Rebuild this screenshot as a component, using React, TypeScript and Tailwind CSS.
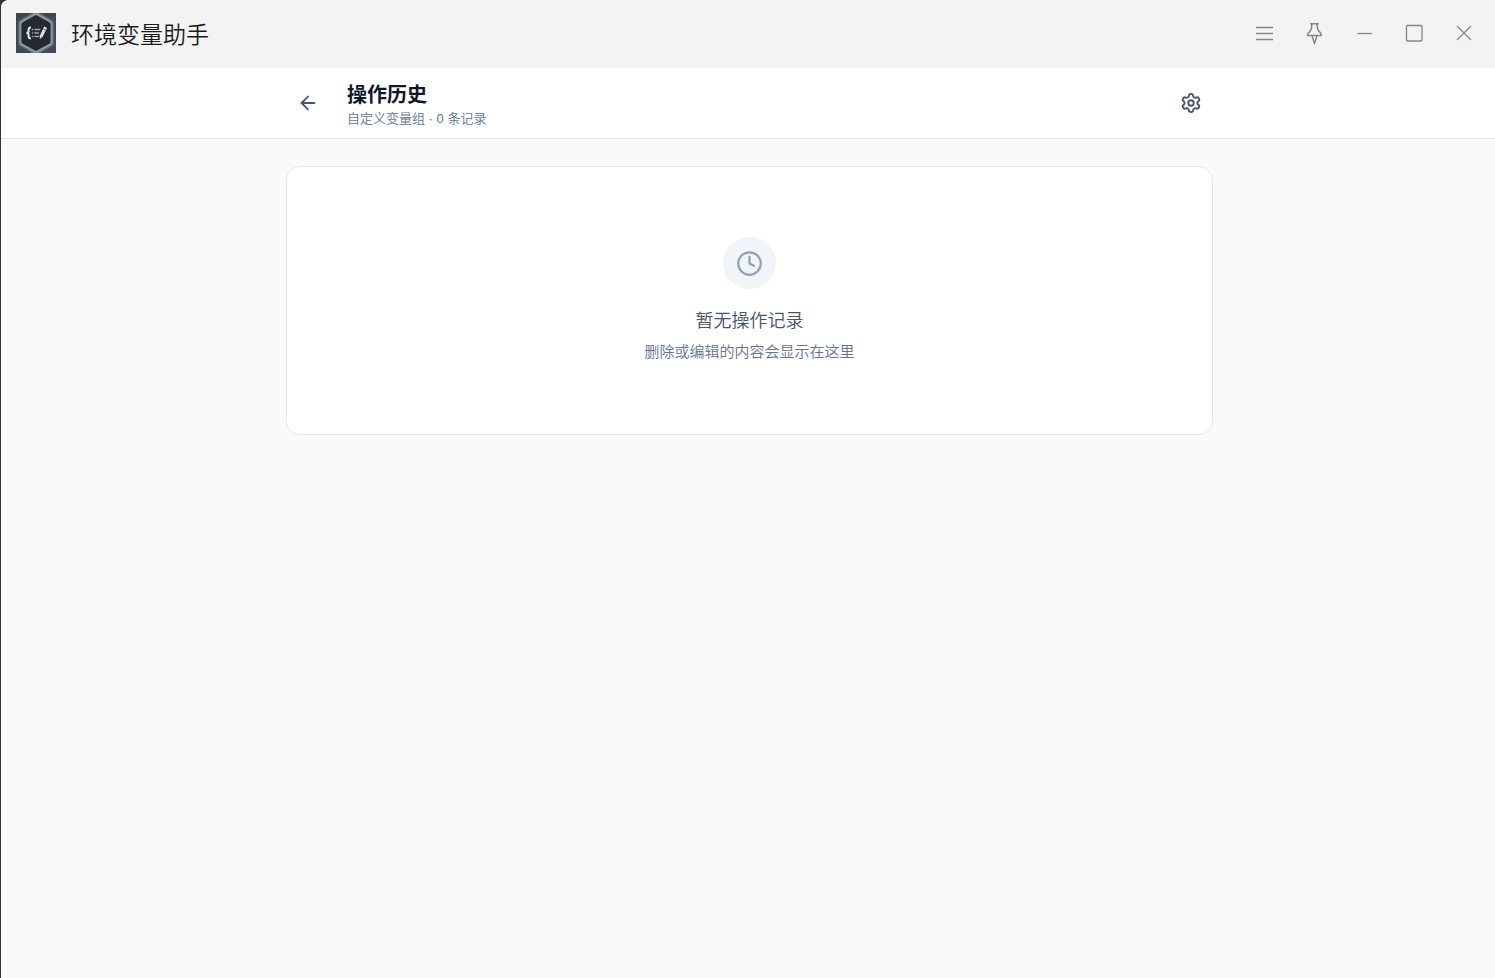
import React from "react";
import { ArrowLeft, Clock, Settings } from "lucide-react";

function Logo() {
  return (
    <svg viewBox="0 0 40 40" className="size-10 shrink-0" aria-hidden="true">
      <defs>
        <linearGradient id="tile" x1="0" y1="0" x2="1" y2="1">
          <stop offset="0" stopColor="#3b434f" />
          <stop offset="1" stopColor="#414b59" />
        </linearGradient>
        <filter id="glow" x="-20%" y="-20%" width="140%" height="140%">
          <feGaussianBlur stdDeviation="0.9" />
        </filter>
      </defs>
      <rect width="40" height="40" fill="url(#tile)" />
      <path d="M20 .5 35.500 9.500v21L20 39.500 4.500 30.500v-21Z" fill="#232a33" stroke="#b4bfcb" strokeWidth="2.200" filter="url(#glow)" />
      <path d="M20 2 34.500 10v20L20 38 5.500 30V10Z" fill="#232a33" />
      <path d="M15 14.500q-2.400 0-2.400 2v1.500q0 2-2.200 2 2.200 0 2.200 2v1.500q0 2 2.400 2" fill="none" stroke="#e6e6e4" strokeWidth="2" />
      <path d="M15.800 16.500h1.500M18.300 16.500h6M15.800 20h1.500M18.300 20H23M15.800 23.500h1.500M18.300 23.500h5" stroke="#a0a4a8" strokeWidth="1.500" />
      <path d="m28.200 13.500 2.900 1.500-4.500 8.700-2.800 2.200.1-3.500Z" fill="#dededd" />
      <path d="m27.300 16 2.700 1.400" stroke="#232a33" strokeWidth=".6" />
    </svg>
  );
}

function WindowButton({ label, children }: { label: string; children: React.ReactNode }) {
  return (
    <button type="button" aria-label={label} className="flex h-10 w-[50px] items-center justify-center text-[#858585]">
      <svg viewBox="0 0 24 24" className="size-6" fill="none" stroke="currentColor" strokeWidth="1.300" aria-hidden="true">
        {children}
      </svg>
    </button>
  );
}

export default function App() {
  return (
    <div className="min-h-screen bg-[#333335] pl-px font-['Liberation_Sans','Noto_Sans_CJK_SC',sans-serif]">
      <div className="flex min-h-screen flex-col overflow-hidden rounded-tl-lg bg-[#fafafa]">
        <div className="flex h-[68px] items-center justify-between bg-[#f3f3f3] pb-0.5 pr-1.5 pl-[15px]">
          <div className="flex items-center gap-[15px]">
            <Logo />
            <span className="font-['Noto_Sans_CJK_SC',sans-serif] text-[23px] leading-8 font-[350] text-[#1c1c1c]">环境变量助手</span>
          </div>
          <div className="flex">
            <WindowButton label="菜单">
              <path d="M4 6.500h17M4 12.500h17M4 18.500h17" />
            </WindowButton>
            <WindowButton label="置顶">
              <path d="M8 2.800h9M9.800 2.800c0 5-.5 6.400-3.200 9-.7.700-1 1.400-1 2.800h13.800c0-1.400-.3-2.100-1-2.800-2.700-2.600-3.200-4-3.200-9M10 14.600l2.500 8 2.500-8" strokeWidth="1.500" strokeLinejoin="round" />
            </WindowButton>
            <WindowButton label="最小化">
              <path d="M5.500 12.500H20" />
            </WindowButton>
            <WindowButton label="最大化">
              <rect x="4.500" y="4.500" width="15.500" height="15.500" rx="1" />
            </WindowButton>
            <WindowButton label="关闭">
              <path d="m5 5 14 14M19 5 5 19" />
            </WindowButton>
          </div>
        </div>

        <header className="border-b border-slate-200 bg-white pl-[3px]">
          <div className="mx-auto flex h-[70px] w-full max-w-[927px] items-center justify-between">
            <div className="flex items-center gap-[17px]">
              <button type="button" aria-label="返回" className="flex size-11 items-center justify-center rounded-lg text-slate-600">
                <ArrowLeft size={22} />
              </button>
              <div className="pt-1">
                <h1 className="text-[20px] leading-7 font-bold text-slate-900">操作历史</h1>
                <p className="text-[13px] leading-5 font-[350] text-slate-500">自定义变量组 · 0 条记录</p>
              </div>
            </div>
            <button type="button" aria-label="设置" className="flex size-11 items-center justify-center rounded-lg text-slate-600">
              <Settings size={22} />
            </button>
          </div>
        </header>

        <main className="pt-[27px] pl-[3px]">
          <section className="mx-auto flex w-full max-w-[927px] flex-col items-center rounded-[14px] border border-slate-200 bg-white py-[70px]">
            <div className="flex h-[52px] w-[53px] items-center justify-center rounded-full bg-slate-100 text-slate-400">
              <Clock size={27} />
            </div>
            <h2 className="mt-[18px] text-[18px] leading-7 font-[350] text-slate-600">暂无操作记录</h2>
            <p className="mt-[5px] text-[15px] leading-6 font-[350] text-slate-500">删除或编辑的内容会显示在这里</p>
          </section>
        </main>
      </div>
    </div>
  );
}
